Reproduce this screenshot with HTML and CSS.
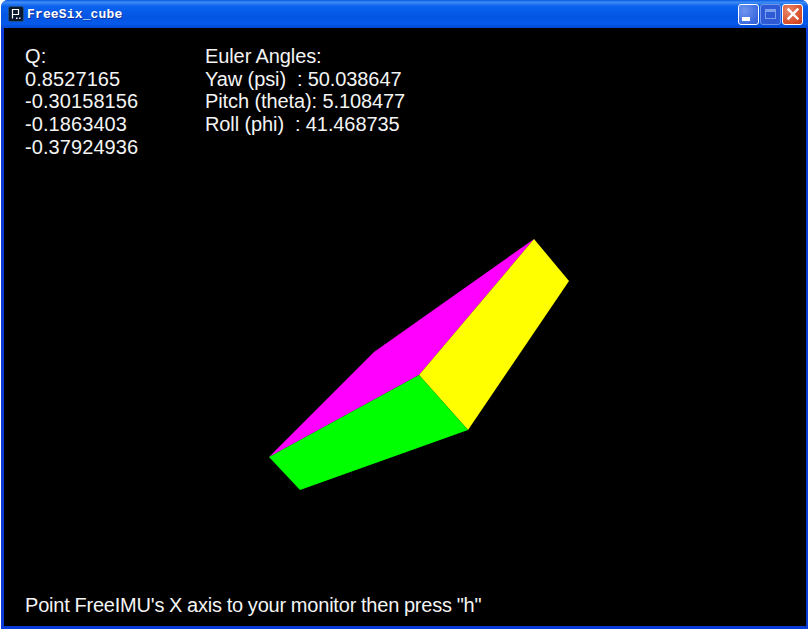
FILE: index.html
```html
<!DOCTYPE html>
<html lang="en">
<head>
    <meta charset="UTF-8">
    <title>FreeSix_cube</title>
    <link rel="stylesheet" href="styles.css">
</head>
<body>
    <div class="window">
        <div class="titlebar">
            <div class="app-icon">
                <svg width="16" height="16" viewBox="0 0 16 16">
                    <rect x="0.5" y="0.5" width="15" height="15" rx="2" fill="#0a1a2c" stroke="#1d4f8b"/>
                    <path d="M4.5 12.5V3.5H10.5V8.5H5" fill="none" stroke="#fff" stroke-width="1.2"/>
                    <rect x="8" y="11.5" width="1.5" height="1.5" fill="#fff"/>
                    <rect x="11" y="11.5" width="1.5" height="1.5" fill="#cfd8e8"/>
                </svg>
            </div>
            <span class="title">FreeSix_cube</span>
            <div class="buttons">
                <div class="btn btn-min"><span class="min-bar"></span></div>
                <div class="btn btn-max"><span class="max-box"></span></div>
                <div class="btn btn-close">
                    <svg width="14" height="14" viewBox="0 0 14 14">
                        <path d="M2.5 2.5L11.5 11.5M11.5 2.5L2.5 11.5" stroke="#fff" stroke-width="2.4" stroke-linecap="square"/>
                    </svg>
                </div>
            </div>
        </div>

        <div class="client">
            <div class="readout">
                <div class="col col-q">
                    <div>Q:</div>
                    <div>0.8527165</div>
                    <div>-0.30158156</div>
                    <div>-0.1863403</div>
                    <div>-0.37924936</div>
                </div>
                <div class="col col-euler">
                    <div>Euler Angles:</div>
                    <div>Yaw (psi)&nbsp; : 50.038647</div>
                    <div>Pitch (theta): 5.108477</div>
                    <div>Roll (phi)&nbsp; : 41.468735</div>
                </div>
            </div>
            <div class="hint">Point FreeIMU's X axis to your monitor then press "h"</div>

            <svg class="cube" width="801" height="598" viewBox="4 28 801 598">
                <polygon points="534,239 419,375 269,457 374,352" fill="#ff00ff"/>
                <polygon points="534,239 569,281 468,430 419,375" fill="#ffff00"/>
                <polygon points="419,375 468,430 300,490 269,457" fill="#00ff00"/>
            </svg>
        </div>
    </div>
</body>
</html>
```

FILE: styles.css
```css
* {
    box-sizing: border-box;
    margin: 0;
    padding: 0;
}
html, body {
    height: 100%;
    background: #fff;
    overflow: hidden;
}
.window {
    width: 807px;
    height: 629px;
    margin-left: 1px;
    display: flex;
    flex-direction: column;
    background: #0b3bd6;
    border-radius: 7px 7px 0 0;
}
.titlebar {
    height: 28px;
    flex: none;
    display: flex;
    align-items: center;
    padding: 0 5px 0 7px;
    background: linear-gradient(180deg, #0a5ce6 0%, #3f8cf3 8%, #0a63ee 22%, #0355e3 60%, #0559ea 85%, #0346cf 100%);
    border-radius: 7px 7px 0 0;
}
.app-icon {
    width: 16px;
    height: 16px;
    display: flex;
}
.title {
    margin-left: 3px;
    font-family: "Liberation Mono", monospace;
    font-size: 13px;
    font-weight: bold;
    letter-spacing: 0.15px;
    color: #fff;
    text-shadow: 1px 1px 0 #0f2f9a;
}
.buttons {
    margin-left: auto;
    display: flex;
    gap: 1px;
}
.btn {
    width: 21px;
    height: 21px;
    border: 1px solid #fff;
    border-radius: 3px;
    display: flex;
    justify-content: center;
    align-items: center;
}
.btn-min {
    background: radial-gradient(circle at 30% 30%, #6f95ee, #3d6be0 70%, #2f58cc);
    align-items: flex-end;
    justify-content: flex-start;
    padding: 0 0 3px 3px;
}
.min-bar {
    width: 8px;
    height: 4px;
    background: #fff;
}
.btn-max {
    background: #2f5ad6;
    border-color: #6f94ea;
}
.max-box {
    width: 11px;
    height: 10px;
    border: 1px solid #7c9eee;
    border-top-width: 3px;
}
.btn-close {
    background: radial-gradient(circle at 30% 30%, #e8886a, #d9502c 65%, #c23d1d);
}
.client {
    flex: 1;
    position: relative;
    margin: 0 2px 3px 3px;
    background: #000;
    color: #f4f4f4;
    font-family: "Liberation Sans", Arial, sans-serif;
    font-size: 20px;
    line-height: 22.7px;
    display: flex;
    flex-direction: column;
    justify-content: space-between;
    padding: 17px 0 9px 21px;
}
.readout {
    display: flex;
}
.col-q {
    width: 180px;
    letter-spacing: 0.08px;
}
.col-euler {
    letter-spacing: -0.1px;
}
.hint {
    letter-spacing: -0.2px;
    word-spacing: -0.5px;
}
.cube {
    position: absolute;
    left: 0;
    top: 0;
}
```
